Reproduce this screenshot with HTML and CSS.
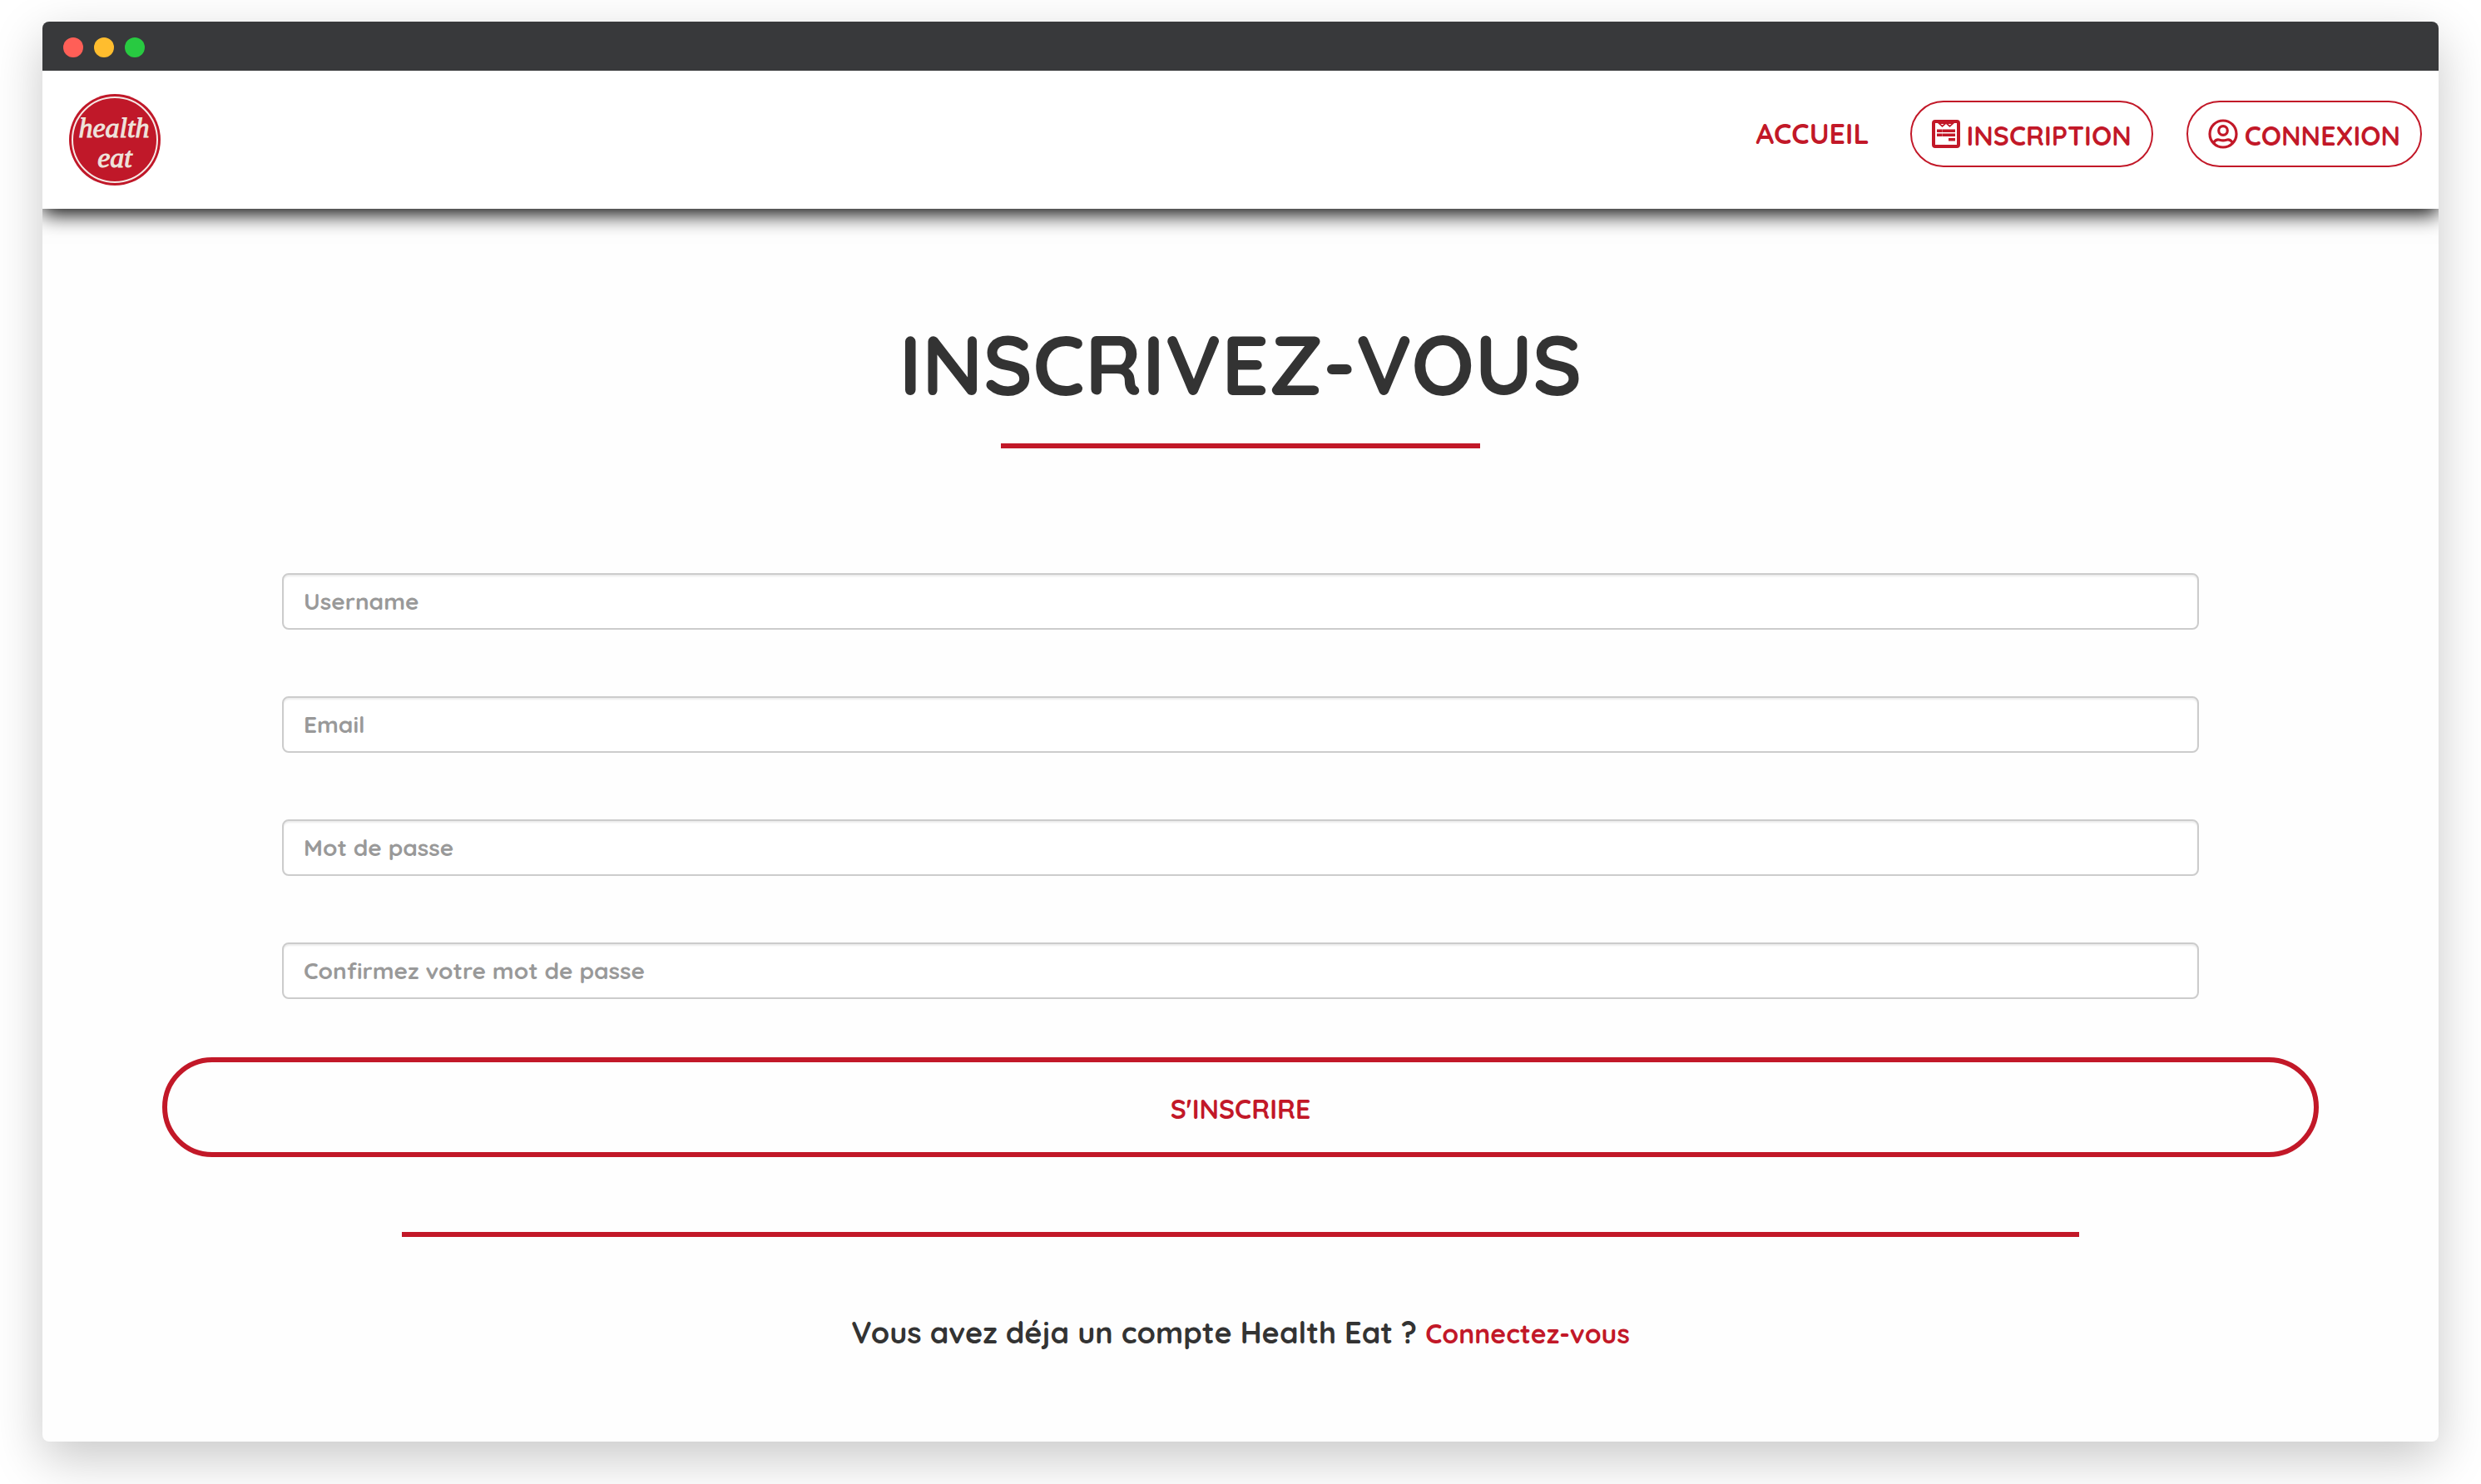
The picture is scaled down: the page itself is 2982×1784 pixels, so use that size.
FILE: index.html
```html
<!DOCTYPE html>
<html lang="fr">
<head>
<meta charset="utf-8">
<meta name="viewport" content="width=device-width, initial-scale=1">
<title>Health Eat - Inscription</title>
<link rel="stylesheet" href="styles.css">
</head>
<body>
<div class="window">
  <div class="titlebar">
    <span class="dot dot-close"></span>
    <span class="dot dot-minimize"></span>
    <span class="dot dot-expand"></span>
  </div>
  <header class="navbar">
    <a class="logo" href="#" aria-label="Health Eat">
      <svg viewBox="0 0 110 110" width="110" height="110">
        <circle cx="55" cy="55" r="55" fill="#c01829"/>
        <circle cx="55" cy="55" r="51" fill="none" stroke="#f6e9e6" stroke-width="2"/>
        <text class="logo-text" text-anchor="middle"><tspan x="54" y="52">health</tspan><tspan x="55" y="88">eat</tspan></text>
      </svg>
    </a>
    <nav class="menu">
      <a class="menu-link" href="#">ACCUEIL</a>
      <a class="pill" href="#">
        <svg class="icon icon-form" viewBox="0 0 34 34" aria-hidden="true">
          <rect x="2" y="2" width="30" height="30" rx="2" fill="none" stroke="currentColor" stroke-width="4"/>
          <path d="M3 3H31V4L27 4 21.500 9 17 5 12.500 9 7 4H3Z M6 11.500H28V15H6Z M6 16.500H28V20H6Z M20 22H28V25.500H20Z" fill="currentColor"/>
          <path d="M10.500 5H14.500L12.500 6.500Z M19.500 5H23.500L21.500 6.500Z" fill="#fff"/>
          <path d="M12.500 11V20.500" stroke="#fff" stroke-width="0.500" opacity="0.600"/>
        </svg>
        <span>INSCRIPTION</span>
      </a>
      <a class="pill" href="#">
        <svg class="icon" viewBox="0 0 36 36" aria-hidden="true">
          <g fill="none" stroke="currentColor" stroke-width="3.200">
            <circle cx="18" cy="18" r="16"/>
            <circle cx="18" cy="14" r="5.300"/>
            <path d="M6.500 28.500C9 25 12 24.500 14 25.300Q18 26.500 22 25.300C24 24.500 27 25 29.500 28.500"/>
          </g>
        </svg>
        <span>CONNEXION</span>
      </a>
    </nav>
  </header>
  <main class="content">
    <h1 class="title">INSCRIVEZ-VOUS</h1>
    <hr class="rule rule-short">
    <form class="form">
      <input class="field" type="text" placeholder="Username" aria-label="Username">
      <input class="field" type="email" placeholder="Email" aria-label="Email">
      <input class="field" type="password" placeholder="Mot de passe" aria-label="Mot de passe">
      <input class="field" type="password" placeholder="Confirmez votre mot de passe" aria-label="Confirmez votre mot de passe">
      <button class="submit" type="submit">S'INSCRIRE</button>
    </form>
    <hr class="rule rule-long">
    <p class="login">Vous avez déja un compte Health Eat ? <a class="login-link" href="#">Connectez-vous</a></p>
  </main>
</div>
</body>
</html>
```
FILE: styles.css
```css
*, *::before, *::after { box-sizing: border-box; }

body {
  margin: 0;
  padding: 26px 51px 51px;
  background: #fff;
  color: #333;
  font-family: Quicksand, Lato, sans-serif;
  font-weight: 700;
}

a { color: #c21828; text-decoration: none; }

.window {
  background: #fefefe;
  border-radius: 8px;
  overflow: hidden;
  box-shadow: 0 20px 60px rgba(0, 0, 0, 0.22);
}

/* Stacked above the navbar so that its shadow only falls downwards. */
.titlebar {
  position: relative;
  z-index: 1;
  display: flex;
  align-items: center;
  gap: 13px;
  height: 59px;
  padding: 3px 25px 0;
  background: #38393b;
}

.dot { width: 24px; height: 24px; border-radius: 50%; }
.dot-close { background: #ff5f57; }
.dot-minimize { background: #ffbd2e; }
.dot-expand { background: #28ca41; }

.navbar {
  display: flex;
  justify-content: space-between;
  align-items: flex-start;
  height: 166px;
  padding: 28px 20px 28px 32px;
  background: #fff;
  box-shadow: 0 6px 24px #000;
}

.logo { display: block; height: 110px; }
.logo-text {
  font-family: "Liberation Serif", serif;
  font-style: italic;
  font-weight: 400;
  font-size: 34px;
  fill: #eee3dc;
  stroke: #eee3dc;
  stroke-width: 1px;
}

.menu { display: flex; align-items: center; gap: 40px; padding-top: 8px; }
.menu-link { padding: 0 9px; font-size: 34px; line-height: 40px; }

.pill {
  display: flex;
  align-items: center;
  justify-content: center;
  gap: 8px;
  height: 80px;
  padding: 4px 24px 0;
  border: 2px solid #c21828;
  border-radius: 40px;
  font-size: 32px;
  line-height: 40px;
}
.icon { width: 36px; height: 36px; margin-bottom: 4px; }
.icon-form { width: 34px; height: 34px; }

.content {
  display: flex;
  flex-direction: column;
  align-items: center;
  padding: 127px 0 102px;
}

.title { margin: 0; font-size: 100px; line-height: 120px; }

.rule { height: 6px; margin: 0; border: 0; background: #c21828; }
.rule-short { width: 20%; margin-top: 35px; }
.rule-long { width: 70%; margin-top: 90px; }

.form {
  display: flex;
  flex-direction: column;
  align-items: center;
  gap: 80px;
  width: 100%;
  margin-top: 150px;
}

.field {
  width: 80%;
  height: 68px;
  padding: 0 24px 2px;
  border: 2px solid #ccc;
  border-radius: 8px;
  background: #fff;
  box-shadow: inset 0 2px 2px rgba(0, 0, 0, 0.08);
  color: #555;
  font: inherit;
  font-size: 28px;
}
.field::placeholder { color: #999; opacity: 1; }

.submit {
  width: 90%;
  height: 120px;
  margin-top: -10px;
  padding: 4px 24px 0;
  border: 6px solid #c21828;
  border-radius: 60px;
  background: transparent;
  color: #c21828;
  font: inherit;
  font-size: 32px;
}

.login { margin: 87px 0 0; font-size: 36px; line-height: 56px; }
.login-link { font-size: 32px; }
```
